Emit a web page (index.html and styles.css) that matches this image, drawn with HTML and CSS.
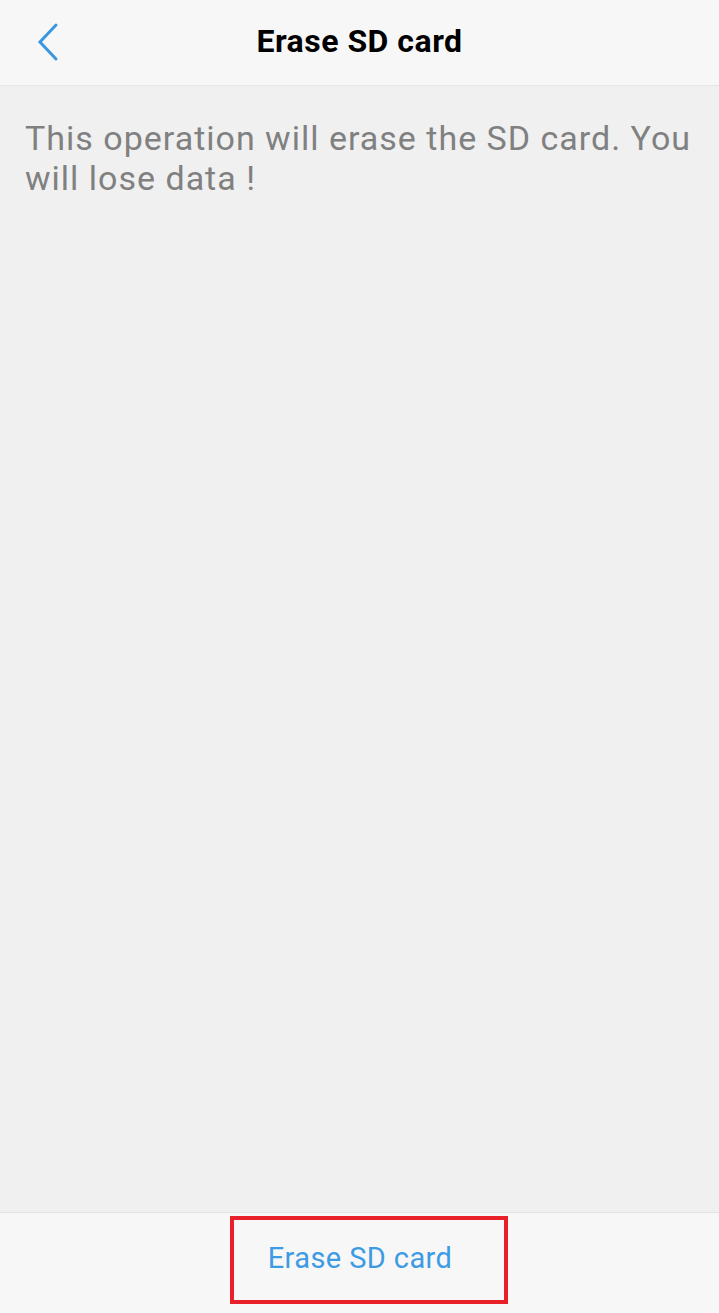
FILE: index.html
```html
<!DOCTYPE html>
<html>
<head>
<meta charset="utf-8">
<link rel="stylesheet" href="styles.css">
</head>
<body>
<div class="app">
  <header class="topbar">
    <span class="back">
      <svg width="24" height="40" viewBox="0 0 24 40"><polyline points="19,3 3,20 19,37" fill="none" stroke="#3a96e0" stroke-width="3" stroke-linecap="round" stroke-linejoin="miter"/></svg>
    </span>
    <h1 class="title">Erase SD card</h1>
  </header>
  <main class="content">
    <p class="warning">This operation will erase the SD card. You will lose data !</p>
  </main>
  <footer class="bottombar">
    <div class="highlight">
      <button class="action">Erase SD card</button>
    </div>
  </footer>
</div>
</body>
</html>
```
FILE: styles.css
```css
* { box-sizing: border-box; }
html, body { margin: 0; padding: 0; }
body {
  font-family: Roboto, "Noto Sans", sans-serif;
  background: #f0f0f0;
}
.app {
  width: 719px;
  height: 1313px;
  display: flex;
  flex-direction: column;
}
.topbar {
  height: 86px;
  flex: none;
  background: #f7f7f7;
  border-bottom: 1px solid #e6e6e6;
  display: flex;
  align-items: center;
  justify-content: center;
  padding-bottom: 4px;
  position: relative;
}
.back {
  position: absolute;
  left: 37px;
  top: 22px;
  width: 24px;
  height: 40px;
  display: block;
}
.back svg { display: block; }
.title {
  margin: 0;
  font-size: 32px;
  font-weight: 700;
  color: #000;
  letter-spacing: 0.5px;
}
.content {
  flex: 1;
  padding: 32px 25px 0 25px;
}
.warning {
  margin: 0;
  font-size: 34px;
  line-height: 40px;
  letter-spacing: 1px;
  color: #808080;
}
.bottombar {
  height: 101px;
  flex: none;
  background: #f7f7f7;
  border-top: 1px solid #e4e4e4;
  display: flex;
  justify-content: center;
  padding-top: 3px;
}
.highlight {
  width: 278px;
  height: 88px;
  margin-left: 18px;
  border: 4px solid #e8202a;
  display: flex;
  align-items: center;
  justify-content: center;
}
.action {
  border: 0;
  background: none;
  padding: 0;
  font-family: Roboto, "Noto Sans", sans-serif;
  font-size: 29px;
  letter-spacing: 0.4px;
  color: #3d9be3;
  margin-right: 17px;
  margin-bottom: 4px;
}
```
